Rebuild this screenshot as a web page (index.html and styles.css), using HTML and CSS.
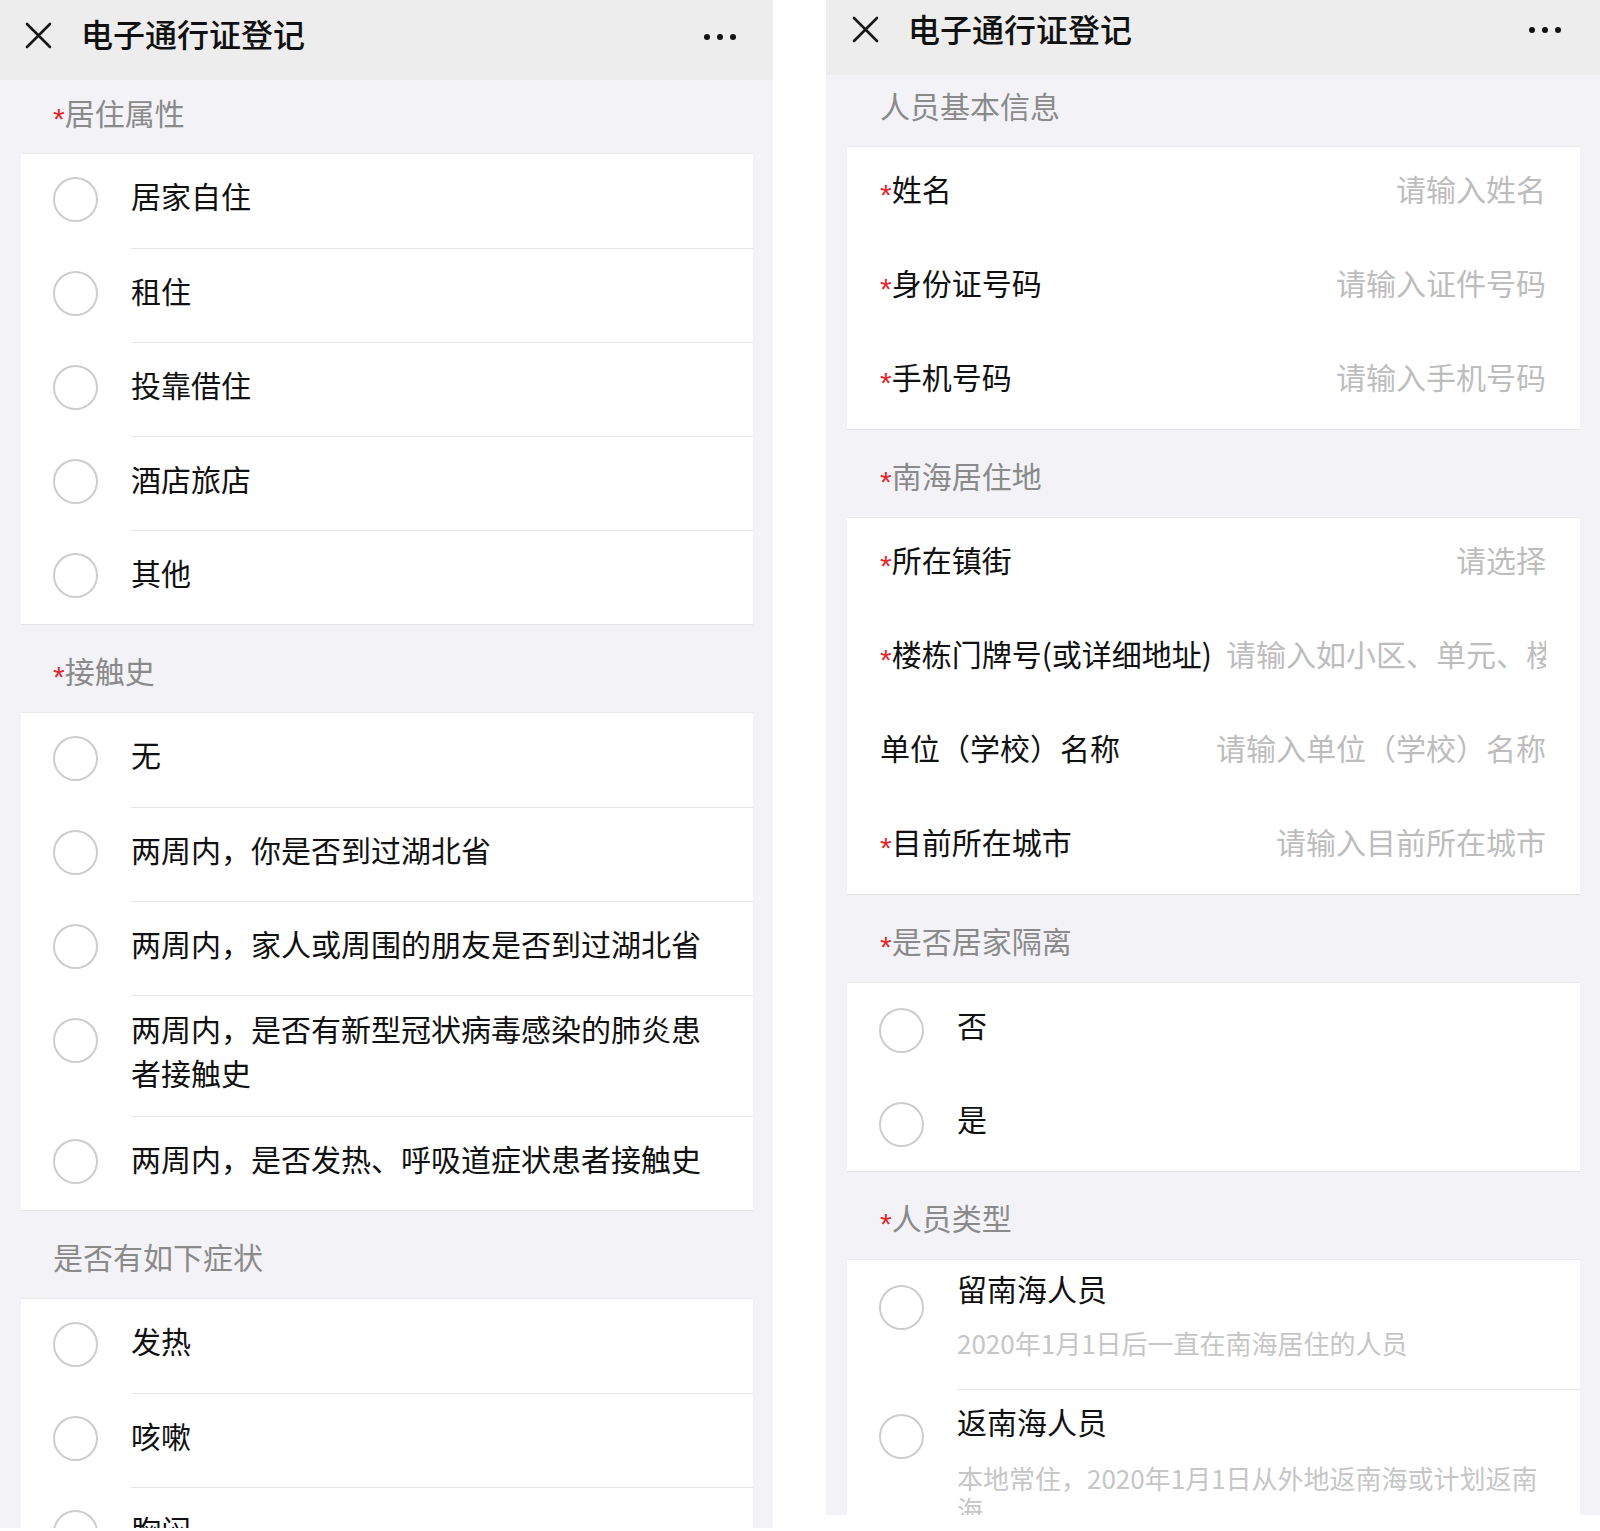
FILE: index.html
```html
<!DOCTYPE html>
<html lang="zh-CN">
<head>
<meta charset="utf-8">
<title>电子通行证登记</title>
<link rel="stylesheet" href="styles.css">
</head>
<body>
<div class="screen">
  <div class="phone phone--left">
    <header class="topbar topbar--left">
      <svg class="close" viewBox="0 0 27 27"><path d="M2 2 L25 25 M25 2 L2 25" stroke="#161616" stroke-width="2.6" fill="none" stroke-linecap="round"/></svg>
      <h1 class="title">电子通行证登记</h1>
      <div class="more"><i></i><i></i><i></i></div>
    </header>
    <div class="section-label section-label--first"><span class="req">*</span>居住属性</div>
    <div class="card card--sep">
      <div class="opt"><span class="radio-cell"><span class="radio"></span></span><span class="opt-text">居家自住</span></div>
      <div class="opt"><span class="radio-cell"><span class="radio"></span></span><span class="opt-text">租住</span></div>
      <div class="opt"><span class="radio-cell"><span class="radio"></span></span><span class="opt-text">投靠借住</span></div>
      <div class="opt"><span class="radio-cell"><span class="radio"></span></span><span class="opt-text">酒店旅店</span></div>
      <div class="opt"><span class="radio-cell"><span class="radio"></span></span><span class="opt-text">其他</span></div>
    </div>
    <div class="section-label"><span class="req">*</span>接触史</div>
    <div class="card card--sep">
      <div class="opt"><span class="radio-cell"><span class="radio"></span></span><span class="opt-text">无</span></div>
      <div class="opt"><span class="radio-cell"><span class="radio"></span></span><span class="opt-text">两周内，你是否到过湖北省</span></div>
      <div class="opt"><span class="radio-cell"><span class="radio"></span></span><span class="opt-text">两周内，家人或周围的朋友是否到过湖北省</span></div>
      <div class="opt"><span class="radio-cell"><span class="radio"></span></span><span class="opt-text">两周内，是否有新型冠状病毒感染的肺炎患者接触史</span></div>
      <div class="opt"><span class="radio-cell"><span class="radio"></span></span><span class="opt-text">两周内，是否发热、呼吸道症状患者接触史</span></div>
    </div>
    <div class="section-label">是否有如下症状</div>
    <div class="card card--sep">
      <div class="opt"><span class="radio-cell"><span class="radio"></span></span><span class="opt-text">发热</span></div>
      <div class="opt"><span class="radio-cell"><span class="radio"></span></span><span class="opt-text">咳嗽</span></div>
      <div class="opt"><span class="radio-cell"><span class="radio"></span></span><span class="opt-text">胸闷</span></div>
    </div>
  </div>

  <div class="phone phone--right">
    <header class="topbar topbar--right">
      <svg class="close" viewBox="0 0 27 27"><path d="M2 2 L25 25 M25 2 L2 25" stroke="#161616" stroke-width="2.6" fill="none" stroke-linecap="round"/></svg>
      <h1 class="title">电子通行证登记</h1>
      <div class="more"><i></i><i></i><i></i></div>
    </header>
    <div class="section-label section-label--first">人员基本信息</div>
    <div class="card">
      <div class="field"><span class="field-label"><span class="req">*</span>姓名</span><span class="field-value">请输入姓名</span></div>
      <div class="field"><span class="field-label"><span class="req">*</span>身份证号码</span><span class="field-value">请输入证件号码</span></div>
      <div class="field"><span class="field-label"><span class="req">*</span>手机号码</span><span class="field-value">请输入手机号码</span></div>
    </div>
    <div class="section-label"><span class="req">*</span>南海居住地</div>
    <div class="card">
      <div class="field"><span class="field-label"><span class="req">*</span>所在镇街</span><span class="field-value">请选择</span></div>
      <div class="field"><span class="field-label"><span class="req">*</span>楼栋门牌号(或详细地址)</span><span class="field-value">请输入如小区、单元、楼栋、门牌号等</span></div>
      <div class="field"><span class="field-label">单位（学校）名称</span><span class="field-value">请输入单位（学校）名称</span></div>
      <div class="field"><span class="field-label"><span class="req">*</span>目前所在城市</span><span class="field-value">请输入目前所在城市</span></div>
    </div>
    <div class="section-label"><span class="req">*</span>是否居家隔离</div>
    <div class="card">
      <div class="opt"><span class="radio-cell radio-cell--low"><span class="radio"></span></span><span class="opt-text">否</span></div>
      <div class="opt"><span class="radio-cell radio-cell--low"><span class="radio"></span></span><span class="opt-text">是</span></div>
    </div>
    <div class="section-label"><span class="req">*</span>人员类型</div>
    <div class="card card--sep">
      <div class="opt"><span class="radio-cell radio-cell--tall"><span class="radio"></span></span>
        <div class="opt-body"><div class="opt-title">留南海人员</div><div class="opt-desc">2020年1月1日后一直在南海居住的人员</div></div>
      </div>
      <div class="opt"><span class="radio-cell radio-cell--tall"><span class="radio"></span></span>
        <div class="opt-body"><div class="opt-title">返南海人员</div><div class="opt-desc">本地常住，2020年1月1日从外地返南海或计划返南海</div></div>
      </div>
    </div>
  </div>
</div>
</body>
</html>
```

FILE: styles.css
```css
html, body {
  margin: 0;
  padding: 0;
  background: #ffffff;
}
body {
  font-family: "Noto Sans CJK SC", "Noto Sans", "Liberation Sans", sans-serif;
  color: #111111;
}
.screen {
  display: flex;
  align-items: flex-start;
  gap: 53px;
  width: 1600px;
}
.phone {
  flex: none;
  background: #f3f3f7;
  overflow: hidden;
}
.phone--left {
  width: 773px;
  height: 1528px;
}
.phone--right {
  width: 774px;
  height: 1515px;
}
.topbar {
  display: flex;
  align-items: center;
  box-sizing: border-box;
  background: #ededed;
  padding-left: 25px;
  padding-right: 37px;
}
.topbar--left {
  height: 80px;
  padding-bottom: 10px;
}
.topbar--right {
  height: 75px;
  padding-bottom: 16px;
  padding-left: 26px;
  padding-right: 39px;
}
.close {
  flex: none;
  width: 27px;
  height: 27px;
}
.title {
  flex: 1;
  margin: 0 0 0 29px;
  padding-bottom: 4px;
  font-size: 32px;
  line-height: 40px;
  font-weight: 500;
  color: #111111;
}
.more {
  display: flex;
  gap: 7px;
}
.topbar--left .more {
  margin-top: 3px;
}
.more i {
  display: block;
  width: 6px;
  height: 6px;
  border-radius: 50%;
  background: #111111;
}
.section-label {
  padding: 25px 0 22px 53px;
  font-size: 30px;
  line-height: 40px;
  color: #8a8a8a;
}
.section-label--first {
  padding-top: 12px;
  padding-bottom: 21px;
}
.phone--right .section-label {
  padding-left: 54px;
}
.phone--right .section-label--first {
  padding-top: 10px;
}
.req {
  color: #e0282d;
  font-family: "Liberation Sans", sans-serif;
  font-size: 30px;
  line-height: 0;
  vertical-align: -0.12em;
}
.card {
  margin: 0 20px 0 21px;
  background: #ffffff;
  border-top: 1px solid #ebebeb;
  border-bottom: 1px solid #e3e3e3;
}
.opt {
  display: flex;
  align-items: flex-start;
}
.radio-cell {
  flex: none;
  display: flex;
  align-items: center;
  box-sizing: border-box;
  width: 110px;
  height: 90px;
  padding-left: 32px;
}
.radio-cell--low {
  height: 94px;
}
.radio-cell--tall {
  height: 94px;
}
.radio {
  display: block;
  width: 45px;
  height: 45px;
  box-sizing: border-box;
  border: 2px solid #cdcdcd;
  border-radius: 50%;
}
.opt-text {
  flex: 1;
  display: flex;
  align-items: center;
  box-sizing: border-box;
  min-height: 94px;
  padding: 10px 40px 22px 0;
  font-size: 30px;
  line-height: 44px;
  color: #111111;
}
.card--sep .opt + .opt .opt-text,
.card--sep .opt + .opt .opt-body {
  border-top: 1px solid #e6e6e6;
}
.opt-body {
  flex: 1;
  box-sizing: border-box;
  padding: 8px 30px 31px 0;
}
.opt + .opt .opt-body {
  padding-top: 11px;
}
.opt-title {
  font-size: 30px;
  line-height: 40px;
  color: #111111;
}
.opt-desc {
  margin-top: 19px;
  font-size: 26px;
  line-height: 31px;
  color: #c6c6c6;
}
.opt + .opt .opt-desc {
  margin-top: 21px;
}
.field {
  display: flex;
  align-items: center;
  box-sizing: border-box;
  height: 94px;
  padding: 0 34px 13px 33px;
  font-size: 30px;
  line-height: 40px;
}
.field-label {
  flex: none;
  color: #111111;
  white-space: nowrap;
}
.field-value {
  flex: 1;
  min-width: 0;
  margin-left: 14px;
  text-align: right;
  white-space: nowrap;
  overflow: hidden;
  color: #bdbdbd;
}
```
